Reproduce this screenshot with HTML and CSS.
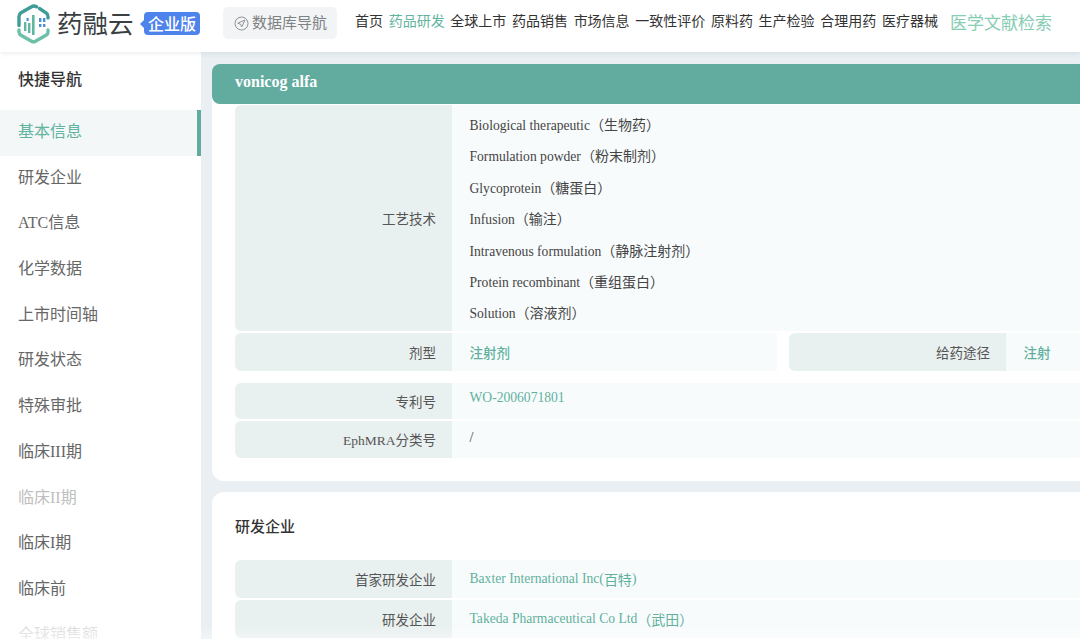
FILE: index.html
```html
<!DOCTYPE html>
<html lang="zh">
<head>
<meta charset="utf-8">
<title>药融云</title>
<link rel="stylesheet" href="styles.css">
</head>
<body>
<header class="topbar">
  <div class="brand">
    <svg class="logo-mark" width="33" height="40" viewBox="0 0 33 40" aria-hidden="true">
      <path d="M19.5 2.8 Q17 1.2 14.5 2.8 L4 8.8 Q2 10 2 12.4 V21.5" fill="none" stroke="#3f9c96" stroke-width="3.4" stroke-linecap="round"/>
      <path d="M22.5 4.5 L29 8.8 Q31 10 31 12.4 V14" fill="none" stroke="#3f9c96" stroke-width="3.4" stroke-linecap="round"/>
      <path d="M2 26 V28 Q2 30 4 31.2 L14.5 37.2 Q16.5 38.4 18.5 37.2 L29 31.2 Q31 30 31 28 V26" fill="none" stroke="#6dc0a8" stroke-width="3.4" stroke-linecap="round"/>
      <g fill="#4a90d9">
        <rect x="9.5" y="14" width="2.2" height="3"/><rect x="22" y="14" width="2.4" height="4"/><rect x="26" y="14" width="2.4" height="4"/>
        <rect x="22" y="20" width="2.4" height="3"/><rect x="26" y="20" width="2.4" height="3"/>
      </g>
      <g fill="#5cb8a0">
        <rect x="7" y="18" width="2.4" height="9"/><rect x="11" y="19" width="2.4" height="10"/><rect x="15" y="11" width="2.6" height="20"/>
      </g>
    </svg>
    <span class="logo-text">药融云</span>
    <span class="edition">企业版</span>
  </div>
  <a class="db-nav">
    <svg width="15" height="15" viewBox="0 0 15 15" aria-hidden="true">
      <circle cx="7.5" cy="7.5" r="6.5" fill="none" stroke="#8f9496" stroke-width="1"/>
      <path d="M11 4 L3.8 7.2 L6.6 8.3 L7.7 11 Z" fill="none" stroke="#8f9496" stroke-width="1" stroke-linejoin="round"/>
    </svg>
    <span class="db-text">数据库导航</span>
  </a>
  <nav class="mainnav">
    <a>首页</a>
    <a class="on">药品研发</a>
    <a>全球上市</a>
    <a>药品销售</a>
    <a>市场信息</a>
    <a>一致性评价</a>
    <a>原料药</a>
    <a>生产检验</a>
    <a>合理用药</a>
    <a>医疗器械</a>
  </nav>
  <a class="literature">医学文献检索</a>
</header>
<div class="body">
  <aside class="sidebar">
    <h2 class="side-title">快捷导航</h2>
    <ul class="side-list">
      <li class="active">基本信息</li>
      <li>研发企业</li>
      <li>ATC信息</li>
      <li>化学数据</li>
      <li>上市时间轴</li>
      <li>研发状态</li>
      <li>特殊审批</li>
      <li>临床III期</li>
      <li class="muted">临床II期</li>
      <li>临床I期</li>
      <li>临床前</li>
      <li class="muted">全球销售额</li>
    </ul>
  </aside>
  <main class="content">
    <section class="card first">
      <h1 class="card-head">vonicog alfa</h1>
      <div class="table">
        <div class="row">
          <div class="label">工艺技术</div>
          <div class="value lines">
            <p>Biological therapeutic<span class="zh">（生物药）</span></p>
            <p>Formulation powder<span class="zh">（粉末制剂）</span></p>
            <p>Glycoprotein<span class="zh">（糖蛋白）</span></p>
            <p>Infusion<span class="zh">（输注）</span></p>
            <p>Intravenous formulation<span class="zh">（静脉注射剂）</span></p>
            <p>Protein recombinant<span class="zh">（重组蛋白）</span></p>
            <p>Solution<span class="zh">（溶液剂）</span></p>
          </div>
        </div>
        <div class="row double h38">
          <div class="label">剂型</div>
          <div class="value link bold">注射剂</div>
          <div class="label second">给药途径</div>
          <div class="value link bold">注射</div>
        </div>
        <div class="row h36 spaced">
          <div class="label">专利号</div>
          <div class="value link high">WO-2006071801</div>
        </div>
        <div class="row h37">
          <div class="label">EphMRA分类号</div>
          <div class="value high slash">/</div>
        </div>
      </div>
    </section>
    <section class="card">
      <h2 class="section-title">研发企业</h2>
      <div class="table">
        <div class="row h38">
          <div class="label">首家研发企业</div>
          <div class="value link">Baxter International Inc(<span class="zh">百特</span>)</div>
        </div>
        <div class="row h38">
          <div class="label">研发企业</div>
          <div class="value link">Takeda Pharmaceutical Co Ltd<span class="zh">（武田）</span></div>
        </div>
      </div>
    </section>
  </main>
  <div class="fade"></div>
  <div class="side-fade"></div>
</div>
</body>
</html>
```
FILE: styles.css
```css
* { box-sizing: border-box; }
html, body { margin: 0; padding: 0; height: 639px; overflow: hidden; }
body {
  font-family: "Liberation Serif", "Noto Sans CJK SC", serif;
  color: #333;
  background: #e9eff3;
  width: 1080px;
}
p, h1, h2, ul { margin: 0; padding: 0; }
.topbar {
  height: 52px;
  background: #fff;
  display: flex;
  align-items: center;
  padding: 0 0 6px 17px;
  position: relative;
  z-index: 2;
  box-shadow: 0 1px 5px rgba(120,135,145,.18);
}
.brand { display: flex; align-items: center; width: 206px; }
.logo-mark { flex: none; margin-top: 1px; }
.logo-text {
  font-family: "Noto Sans CJK SC", sans-serif;
  font-size: 25.5px;
  line-height: 30px;
  width: 78px;
  margin: 0 0 2px 7px;
  color: #3a3f42;
}
.edition {
  position: relative;
  flex: none;
  font-family: "Noto Sans CJK SC", sans-serif;
  font-size: 16px;
  font-weight: 500;
  line-height: 23px;
  width: 56px;
  margin-left: 9px;
  text-align: center;
  color: #fff;
  background: #4f83ec;
  border-radius: 4px;
}
.edition::before {
  content: "";
  position: absolute;
  left: -4px;
  top: 8px;
  border: 4px solid transparent;
  border-left: 0;
  border-right-color: #4f83ec;
}
.db-nav {
  display: flex;
  align-items: center;
  gap: 3px;
  width: 114px;
  height: 32px;
  margin-right: 18px;
  padding-left: 11px;
  background: #f3f4f5;
  border-radius: 5px;
  font-family: "Noto Sans CJK SC", sans-serif;
  font-size: 15px;
  color: #7d8284;
}
.db-text { margin-bottom: 3px; }
.mainnav {
  display: flex;
  gap: 5.67px;
  font-size: 14px;
  color: #333;
  width: 595px;
  margin-bottom: 6px;
}
.mainnav .on { color: #62b39f; }
.literature {
  font-family: "Noto Sans CJK SC", sans-serif;
  font-size: 17px;
  color: #86cdb4;
  white-space: nowrap;
  margin-bottom: 3px;
}
.body { display: flex; height: 587px; position: relative; }
.sidebar { width: 201px; flex: none; background: #fff; padding-top: 16px; }
.side-title {
  font-size: 16px;
  font-weight: 500;
  line-height: 24px;
  padding-left: 18px;
  color: #333;
  margin-bottom: 18px;
}
.side-list { list-style: none; }
.side-list li {
  height: 45.7px;
  line-height: 43px;
  padding-left: 18px;
  font-size: 16px;
  color: #666;
}
.side-list .active {
  color: #62b39f;
  background: #f4f7f8;
  border-right: 4px solid #62ab9f;
}
.side-list .muted { color: #c0c0c0; }
.content { flex: 1; min-width: 0; padding: 12px 0 0 11px; }
.card {
  background: #fff;
  border-radius: 12px 0 0 12px;
  padding: 0 0 23px 23px;
  margin-bottom: 11px;
}
.card-head {
  height: 40px;
  margin: 0 0 1px -23px;
  padding-left: 23px;
  background: #62ab9f;
  border-radius: 8px 0 0 8px;
  color: #fff;
  font-size: 16px;
  font-weight: 700;
  line-height: 36px;
}
.section-title {
  font-size: 15px;
  font-weight: 500;
  line-height: 22px;
  padding-top: 24px;
  margin-bottom: 22px;
  color: #333;
}
.table { display: flex; flex-direction: column; gap: 2px; }
.row { display: grid; grid-template-columns: 217px 1fr; font-size: 13px; }
.row.double { grid-template-columns: 217px 325px 229px 1fr; }
.h38 { height: 38px; }
.h37 { height: 37px; }
.h36 { height: 36px; }
.spaced { margin-top: 10px; }
.label {
  display: flex;
  align-items: center;
  justify-content: flex-end;
  padding: 0 16px 0 0;
  background: #e9f0f0;
  border-radius: 6px 0 0 6px;
  font-size: 13.5px;
  color: #555;
}
.label.second { margin-left: 12px; }
.value {
  display: flex;
  align-items: center;
  padding: 0 0 0 17.5px;
  background: #f8fbfc;
  font-size: 13.6px;
  color: #444;
}
.value.high { padding-bottom: 6px; }
.value.slash { padding-bottom: 3px; font-size: 14px; }
.value.link { color: #5fb19d; }
.value.bold { font-weight: 500; font-size: 13.5px; }
.zh { font-size: 14px; }
.lines { display: block; padding-top: 5px; padding-bottom: 1px; }
.lines p { height: 31.4px; line-height: 31.4px; white-space: nowrap; }
.fade {
  position: absolute;
  left: 201px;
  right: 0;
  bottom: 0;
  height: 14px;
  background: linear-gradient(rgba(255,255,255,0), rgba(255,255,255,.35));
  pointer-events: none;
}
.side-fade {
  position: absolute;
  left: 0;
  width: 201px;
  bottom: 0;
  height: 36px;
  background: linear-gradient(rgba(255,255,255,0), rgba(255,255,255,.7));
  pointer-events: none;
}
```
